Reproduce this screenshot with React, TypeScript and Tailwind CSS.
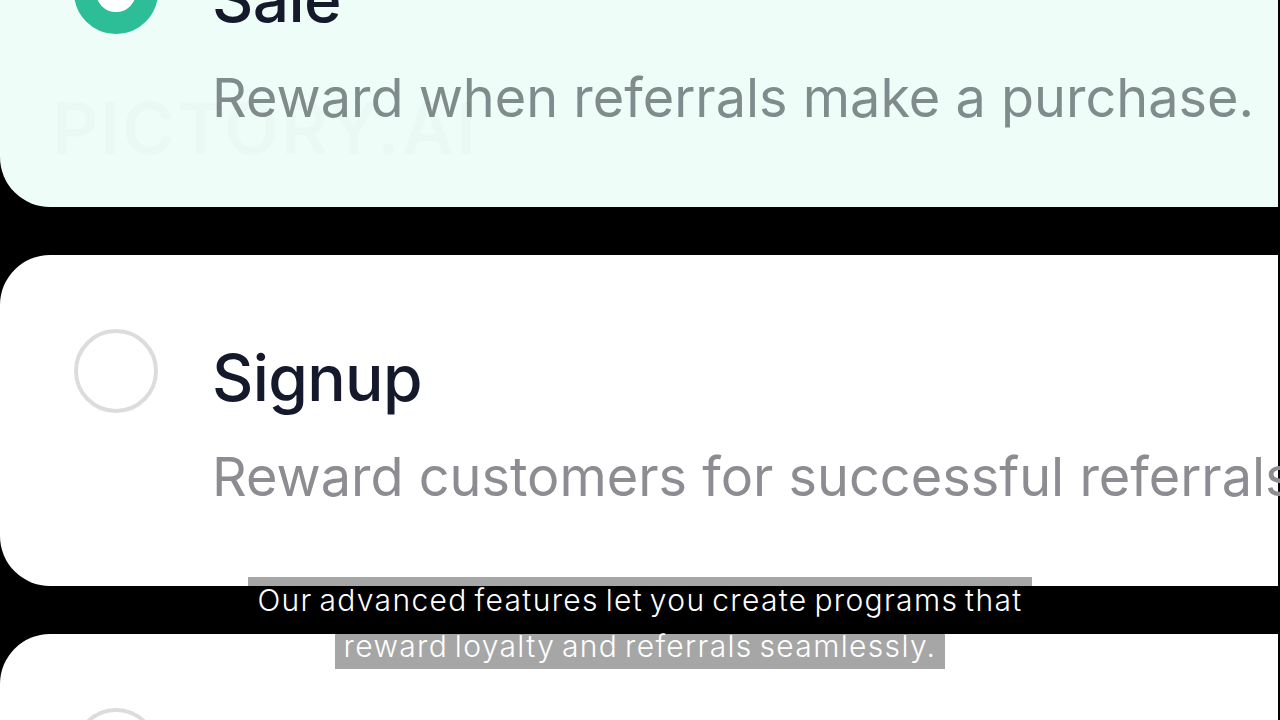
import { Fragment } from 'react'

type Option = {
  title: string
  description: string
  selected?: boolean
}

const OPTIONS: Option[] = [
  { title: 'Sale', description: 'Reward when referrals make a purchase.', selected: true },
  { title: 'Signup', description: 'Reward customers for successful referrals' },
  { title: 'Custom', description: 'Reward customers for any custom event' },
]

const CAPTION = ['Our advanced features let you create programs that', 'reward loyalty and referrals seamlessly.']

function Radio({ selected }: { selected?: boolean }) {
  return selected ? (
    <div className="shrink-0 w-[84px] h-[84px] rounded-full border-[22px] border-[#2dbd97] bg-white" />
  ) : (
    <div className="shrink-0 w-[84px] h-[84px] rounded-full border-[4px] border-[#dcdcdc] bg-white" />
  )
}

export default function App() {
  return (
    <div className="relative w-[1280px] h-[720px] overflow-hidden bg-black font-['Inter',sans-serif]">
      <div className="flex flex-col gap-[48px] -mt-[124px] pr-[2px]">
        {OPTIONS.map((o) => (
          <div
            key={o.title}
            className={`relative h-[331px] shrink-0 rounded-l-[50px] flex pl-[74px] pt-[74px] ${o.selected ? 'bg-[#effdf9]' : 'bg-white'}`}
          >
            <Radio selected={o.selected} />
            <div className="ml-[54px] mt-[9px] whitespace-nowrap">
              <p className="text-[64px] leading-[80px] font-medium text-[#141a2b] tracking-[-0.01em]">{o.title}</p>
              <p className={`mt-[24px] text-[54px] leading-[70px] ${o.selected ? 'text-[#808c8b]' : 'text-[#8c8c92]'}`}>
                {o.description}
              </p>
            </div>

            {/* watermark */}
            {o.selected && (
              <div className="absolute left-[52px] top-[170px] text-black/[0.015] font-semibold leading-none select-none">
                <p className="text-[38px] tracking-wide">VIDEO MADE WITH</p>
                <p className="mt-[8px] text-[72px] tracking-wide">PICTORY.AI</p>
              </div>
            )}
          </div>
        ))}
      </div>

      {/* Caption */}
      <div className="absolute left-0 right-0 top-[577px] flex flex-col items-center">
        {CAPTION.map((line) => (
          <Fragment key={line}>
            <span className="h-[46px] px-[9px] bg-black/35 text-white text-[30px] leading-[46px] font-light tracking-[0.045em] [word-spacing:-0.1em] whitespace-nowrap">
              {line}
            </span>
          </Fragment>
        ))}
      </div>
    </div>
  )
}
